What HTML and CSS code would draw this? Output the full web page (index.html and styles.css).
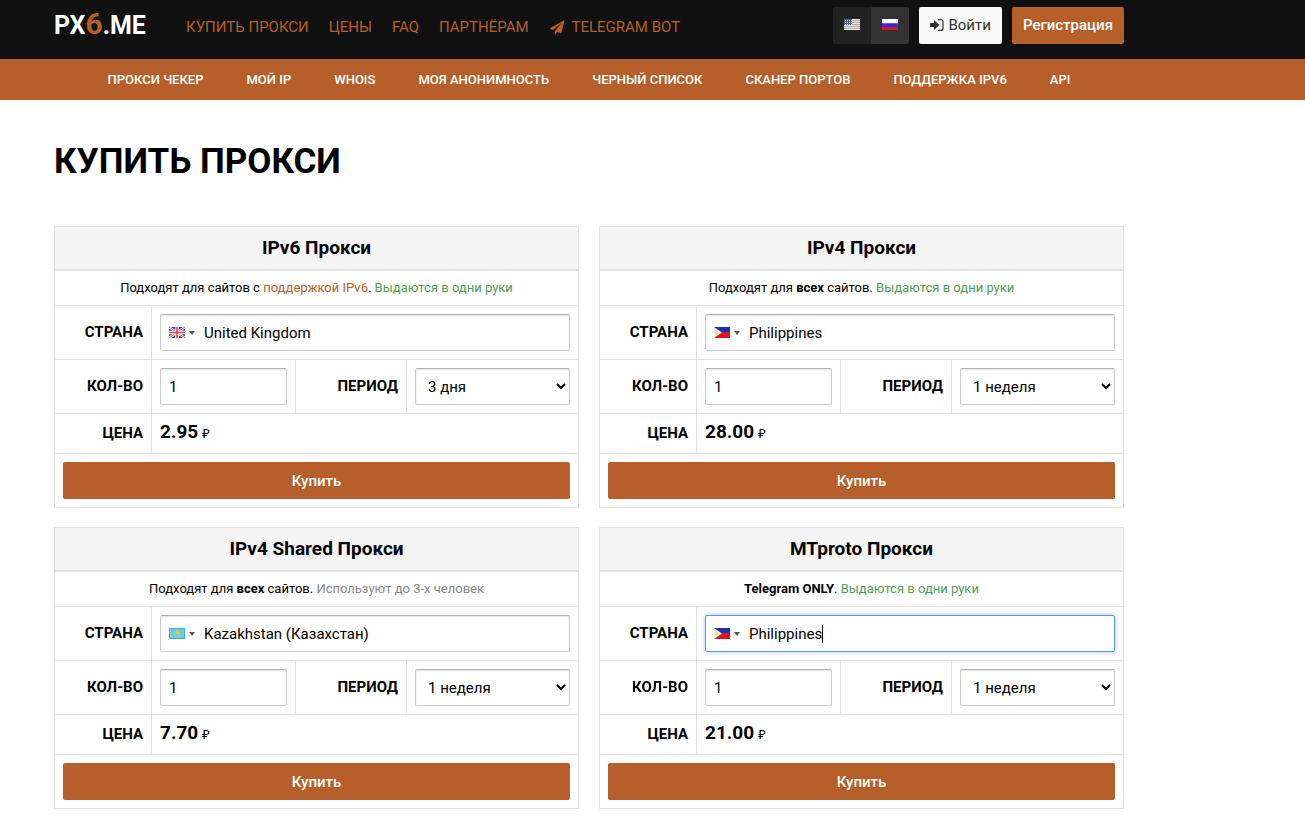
FILE: index.html
```
<!DOCTYPE html>
<html lang="ru">
<head>
    <meta charset="UTF-8">
    <meta name="viewport" content="width=device-width, initial-scale=1.0">
    <title>Купить прокси - PX6.ME</title>
    <link rel="stylesheet" href="styles.css">
</head>
<body>
    <!-- иконки и флаги -->
    <svg class="sprite" aria-hidden="true">
        <symbol id="flag-us" viewBox="0 0 16 11">
            <rect width="16" height="11" fill="#f4eeee"/>
            <path d="M0 1.5h16M0 3.5h16M0 5.5h16M0 7.5h16M0 9.5h16" stroke="#aaa0a0"/>
            <rect width="8" height="6" fill="#53637f"/>
            <path d="M1 1.5h7M1 3.5h7M1 5.5h7" stroke="#b9c2d2" stroke-dasharray="1 1"/>
        </symbol>
        <symbol id="flag-ru" viewBox="0 0 16 11">
            <rect width="16" height="4" fill="#fff"/>
            <rect y="4" width="16" height="4" fill="#2a2ae8"/>
            <rect y="4" width="16" height="1" fill="#5a5af5"/>
            <rect y="8" width="16" height="3" fill="#e31212"/>
        </symbol>
        <symbol id="flag-gb" viewBox="0 0 16 11">
            <rect width="16" height="11" fill="#2c409c"/>
            <path d="M0 0l16 11M16 0L0 11" stroke="#fff" stroke-width="2.4"/>
            <path d="M0 0l16 11M16 0L0 11" stroke="#e0505c" stroke-width="1"/>
            <path d="M8 0v11M0 5.5h16" stroke="#fff" stroke-width="3.4"/>
            <path d="M8 0v11M0 5.5h16" stroke="#e0404c" stroke-width="1.6"/>
        </symbol>
        <symbol id="flag-ph" viewBox="0 0 16 11">
            <rect width="16" height="6" fill="#1c2fb8"/>
            <rect y="5" width="16" height="6" fill="#dc1420"/>
            <path d="M0 0l8 5.5L0 11z" fill="#f6f3dc"/>
            <circle cx="2.8" cy="5.5" r="1.6" fill="#f3dc4a"/>
        </symbol>
        <symbol id="flag-kz" viewBox="0 0 16 11">
            <rect width="16" height="11" fill="#30b4e8"/>
            <rect x="1" y="1" width="14" height="9" fill="#62cbf0"/>
            <path d="M1.5 1v9" stroke="#c8d67a" stroke-dasharray="1 1"/>
            <circle cx="8.5" cy="4.5" r="2.2" fill="#f0c73a"/>
            <path d="M5 6q3.500 4 7 0l-1 2.500h-5z" fill="#e6c84a"/>
        </symbol>
        <symbol id="icon-plane" viewBox="0 0 16 16">
            <path fill="currentColor" d="M16 0L0 9l3.800 1.600L13 3 5.800 11.600V16l2.600-3.200L12.600 14.500z"/>
        </symbol>
        <symbol id="icon-login" viewBox="0 0 14 12">
            <path fill="currentColor" d="M0 4h4V1l5.500 5L4 11V8H0z"/>
            <path fill="none" stroke="currentColor" stroke-width="1.2" d="M8 .6h3a2 2 0 0 1 2 2v6.800a2 2 0 0 1-2 2H8"/>
        </symbol>
    </svg>

    <header class="header">
        <div class="container header-inner">
            <a class="logo" href="#">PX<span>6</span>.ME</a>
            <nav class="main-nav">
                <a href="#">Купить прокси</a>
                <a href="#">Цены</a>
                <a href="#">FAQ</a>
                <a href="#">Партнёрам</a>
                <a class="telegram" href="#"><svg class="icon-plane"><use href="#icon-plane"/></svg>Telegram bot</a>
            </nav>
            <div class="user-nav">
                <div class="lang">
                    <a href="#" aria-label="English"><svg class="flag"><use href="#flag-us"/></svg></a>
                    <a class="active" href="#" aria-label="Русский"><svg class="flag"><use href="#flag-ru"/></svg></a>
                </div>
                <a class="btn btn-light" href="#"><svg class="icon-login"><use href="#icon-login"/></svg>Войти</a>
                <a class="btn" href="#">Регистрация</a>
            </div>
        </div>
    </header>

    <nav class="sub-nav">
        <div class="container sub-nav-inner">
            <a href="#">Прокси чекер</a>
            <a href="#">Мой IP</a>
            <a href="#">Whois</a>
            <a href="#">Моя анонимность</a>
            <a href="#">Черный список</a>
            <a href="#">Сканер портов</a>
            <a href="#">Поддержка IPv6</a>
            <a href="#">API</a>
        </div>
    </nav>

    <main class="container">
        <h1>Купить прокси</h1>

        <div class="cards">
            <form class="card">
                <h2>IPv6 Прокси</h2>
                <p class="note">Подходят для сайтов с <a href="#">поддержкой IPv6</a>. <span class="green">Выдаются в одни руки</span></p>
                <div class="row">
                    <label class="name" for="country-1">Страна</label>
                    <div class="cell wide">
                        <div class="country">
                            <svg class="flag"><use href="#flag-gb"/></svg><i class="caret"></i>
                            <input type="text" id="country-1" value="United Kingdom">
                        </div>
                    </div>
                </div>
                <div class="row">
                    <label class="name" for="count-1">Кол-во</label>
                    <div class="cell"><input class="field" type="text" id="count-1" value="1"></div>
                    <label class="name" for="period-1">Период</label>
                    <div class="cell"><select class="field" id="period-1"><option>3 дня</option></select></div>
                </div>
                <div class="row">
                    <div class="name">Цена</div>
                    <div class="cell wide total"><b>2.95</b> <span>₽</span></div>
                </div>
                <div class="buy"><button class="btn" type="button">Купить</button></div>
            </form>

            <form class="card">
                <h2>IPv4 Прокси</h2>
                <p class="note">Подходят для <b>всех</b> сайтов. <span class="green">Выдаются в одни руки</span></p>
                <div class="row">
                    <label class="name" for="country-2">Страна</label>
                    <div class="cell wide">
                        <div class="country">
                            <svg class="flag"><use href="#flag-ph"/></svg><i class="caret"></i>
                            <input type="text" id="country-2" value="Philippines">
                        </div>
                    </div>
                </div>
                <div class="row">
                    <label class="name" for="count-2">Кол-во</label>
                    <div class="cell"><input class="field" type="text" id="count-2" value="1"></div>
                    <label class="name" for="period-2">Период</label>
                    <div class="cell"><select class="field" id="period-2"><option>1 неделя</option></select></div>
                </div>
                <div class="row">
                    <div class="name">Цена</div>
                    <div class="cell wide total"><b>28.00</b> <span>₽</span></div>
                </div>
                <div class="buy"><button class="btn" type="button">Купить</button></div>
            </form>

            <form class="card">
                <h2>IPv4 Shared Прокси</h2>
                <p class="note">Подходят для <b>всех</b> сайтов. <span class="gray">Используют до 3-х человек</span></p>
                <div class="row">
                    <label class="name" for="country-3">Страна</label>
                    <div class="cell wide">
                        <div class="country">
                            <svg class="flag"><use href="#flag-kz"/></svg><i class="caret"></i>
                            <input type="text" id="country-3" value="Kazakhstan (Казахстан)">
                        </div>
                    </div>
                </div>
                <div class="row">
                    <label class="name" for="count-3">Кол-во</label>
                    <div class="cell"><input class="field" type="text" id="count-3" value="1"></div>
                    <label class="name" for="period-3">Период</label>
                    <div class="cell"><select class="field" id="period-3"><option>1 неделя</option></select></div>
                </div>
                <div class="row">
                    <div class="name">Цена</div>
                    <div class="cell wide total"><b>7.70</b> <span>₽</span></div>
                </div>
                <div class="buy"><button class="btn" type="button">Купить</button></div>
            </form>

            <form class="card">
                <h2>MTproto Прокси</h2>
                <p class="note"><b>Telegram ONLY</b>. <span class="green">Выдаются в одни руки</span></p>
                <div class="row">
                    <label class="name" for="country-4">Страна</label>
                    <div class="cell wide">
                        <div class="country">
                            <svg class="flag"><use href="#flag-ph"/></svg><i class="caret"></i>
                            <input type="text" id="country-4" value="Philippines">
                        </div>
                    </div>
                </div>
                <div class="row">
                    <label class="name" for="count-4">Кол-во</label>
                    <div class="cell"><input class="field" type="text" id="count-4" value="1"></div>
                    <label class="name" for="period-4">Период</label>
                    <div class="cell"><select class="field" id="period-4"><option>1 неделя</option></select></div>
                </div>
                <div class="row">
                    <div class="name">Цена</div>
                    <div class="cell wide total"><b>21.00</b> <span>₽</span></div>
                </div>
                <div class="buy"><button class="btn" type="button">Купить</button></div>
            </form>
        </div>
    </main>

    <script>
        // курсор в конец последнего поля страны
        const country = document.getElementById('country-4');
        country.focus({ preventScroll: true });
        country.setSelectionRange(country.value.length, country.value.length);
    </script>
</body>
</html>
```
FILE: styles.css
```
:root {
    --accent: #b65f2b;
    --line: #e3e3e3;
    --dark: #111;
}

* {
    box-sizing: border-box;
}

body {
    margin: 0;
    font-family: Roboto, 'Liberation Sans', sans-serif;
    font-size: 15px;
    line-height: 20px;
    color: #000;
    background: #fff;
}

a {
    color: var(--accent);
    text-decoration: none;
}

.sprite {
    display: none;
}

.container {
    max-width: 1178px;
    padding: 0 54px;
}

.flag {
    display: block;
    flex: none;
    width: 16px;
    height: 11px;
}

/* шапка */
.header {
    background: var(--dark);
}

.header-inner {
    display: flex;
    align-items: flex-start;
    height: 59px;
}

.logo {
    width: 132px;
    padding-top: 7px;
    font-size: 25px;
    line-height: 34px;
    font-weight: 700;
    color: #fff;
}

.logo span {
    font-size: 30px;
    color: var(--accent);
}

.main-nav {
    display: flex;
    gap: 20px;
    padding-top: 17px;
    font-size: 15px;
    text-transform: uppercase;
}

.telegram {
    display: flex;
    align-items: center;
    gap: 7px;
}

.icon-plane {
    width: 16px;
    height: 15px;
}

.user-nav {
    display: flex;
    gap: 10px;
    margin-left: auto;
    padding-top: 7px;
}

.lang {
    display: flex;
    border-radius: 2px;
    overflow: hidden;
    background: #222;
}

.lang a {
    display: flex;
    align-items: center;
    padding: 0 11px 2px;
}

.lang .active {
    background: #333;
}

.btn {
    display: flex;
    align-items: center;
    justify-content: center;
    gap: 4px;
    height: 37px;
    padding: 0 11px;
    border: 0;
    border-radius: 2px;
    background: var(--accent);
    color: #fff;
    font: inherit;
    font-weight: 500;
    cursor: pointer;
}

.user-nav .btn {
    padding-bottom: 2px;
}

.btn-light {
    background: #f9f9f9;
    color: #333;
    font-weight: 400;
}

.icon-login {
    width: 14px;
    height: 12px;
}

.sub-nav {
    background: var(--accent);
}

.sub-nav-inner {
    display: flex;
    justify-content: center;
    gap: 43px;
    font-size: 13px;
    line-height: 41px;
    font-weight: 500;
    text-transform: uppercase;
}

.sub-nav a {
    color: #fff;
}

h1 {
    margin: 40px 0 42px;
    font-size: 35px;
    line-height: 44px;
    font-weight: 700;
    text-transform: uppercase;
}

/* карточки */
.cards {
    display: grid;
    grid-template-columns: 1fr 1fr;
    gap: 19px 20px;
}

.card {
    border: 1px solid var(--line);
}

.card h2 {
    margin: 0;
    border-bottom: 2px solid var(--line);
    background: #f4f4f4;
    font-size: 19px;
    line-height: 42px;
    font-weight: 700;
    text-align: center;
}

.note {
    margin: 0;
    font-size: 13px;
    line-height: 34px;
    text-align: center;
}

.green {
    color: #4fa052;
}

.gray {
    color: #888;
}

.row {
    display: grid;
    grid-template-columns: 97fr 144fr 111fr 171fr;
    border-top: 1px solid var(--line);
}

.name {
    display: flex;
    align-items: center;
    justify-content: flex-end;
    padding: 0 8px 2px;
    border-right: 1px solid var(--line);
    font-weight: 700;
    text-transform: uppercase;
}

.cell {
    min-width: 0;
    padding: 8px;
}

.cell:nth-child(2):not(.wide) {
    border-right: 1px solid var(--line);
}

.wide {
    grid-column: 2 / -1;
}

.field,
.country {
    width: 100%;
    height: 37px;
    padding: 0 8px;
    border: 1px solid #ccc;
    border-top-color: #b3b3b3;
    border-radius: 2px;
    background: #fff;
    box-shadow: inset 0 1px 2px rgba(0, 0, 0, 0.12);
    font: inherit;
    color: #000;
}

.country {
    display: flex;
    align-items: center;
}

.country:focus-within {
    border-color: #5897fb;
    box-shadow: 0 0 4px rgba(88, 151, 251, 0.6);
}

.country input {
    field-sizing: content;
    min-width: 0;
    padding: 0;
    border: 0;
    outline: 0;
    background: none;
    font: inherit;
    color: #000;
    caret-color: transparent;
}

/* немигающий курсор */
.country:focus-within::after {
    content: '';
    width: 1px;
    height: 18px;
    background: #000;
}

.caret {
    margin: 0 9px 0 4px;
    border: 3px solid transparent;
    border-top: 4px solid #555;
    border-bottom: 0;
}

.total {
    display: flex;
    align-items: baseline;
    gap: 4px;
    height: 39px;
}

.total b {
    font-size: 19px;
}

.total span {
    font-family: 'Noto Sans', sans-serif;
    font-size: 13px;
}

.buy {
    padding: 8px;
    border-top: 1px solid var(--line);
}

.buy .btn {
    width: 100%;
}
```
